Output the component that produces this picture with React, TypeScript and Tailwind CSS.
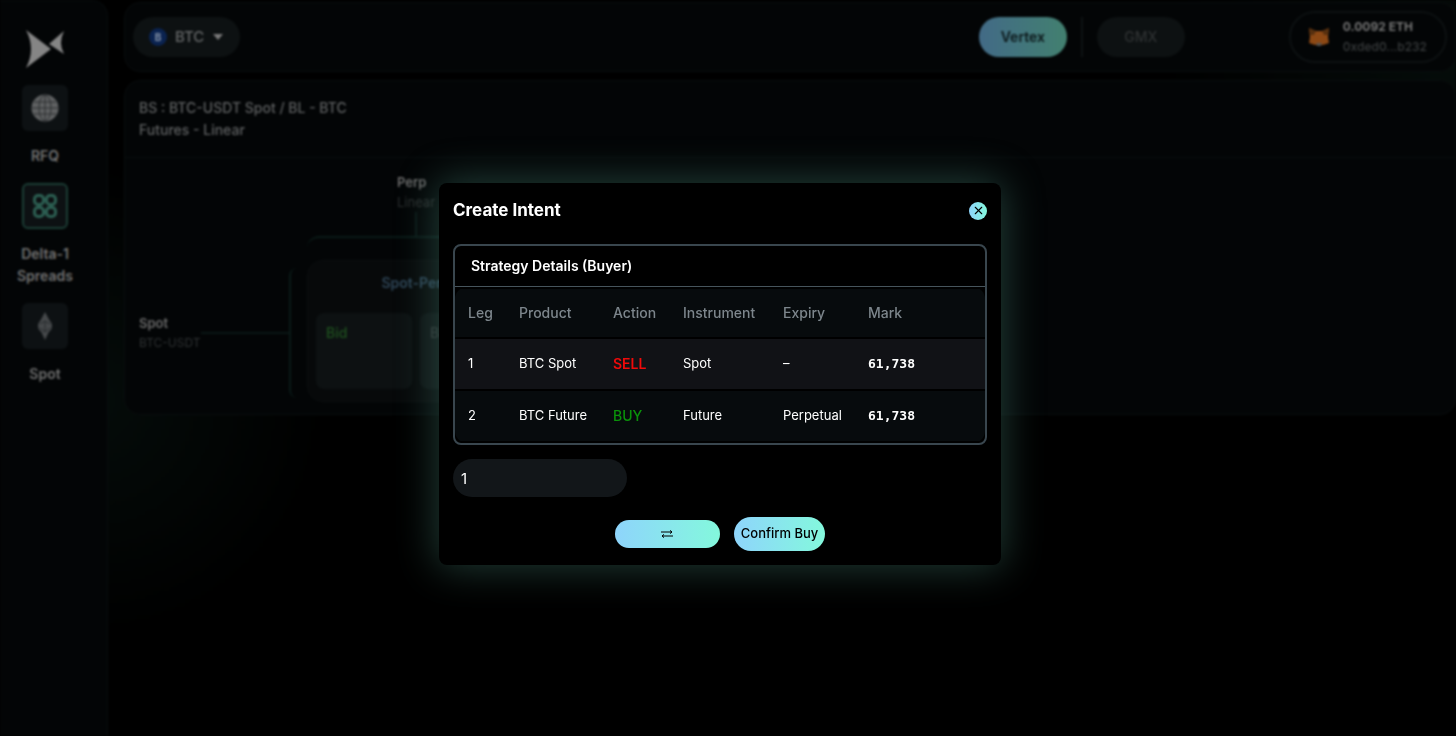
import { useState } from 'react'
import { X } from 'lucide-react'

type Leg = {
  id: number
  product: string
  action: 'BUY' | 'SELL'
  instrument: string
  expiry: string
  mark: string
}

const legs: Leg[] = [
  { id: 1, product: 'BTC Spot', action: 'SELL', instrument: 'Spot', expiry: '–', mark: '61,738' },
  { id: 2, product: 'BTC Future', action: 'BUY', instrument: 'Future', expiry: 'Perpetual', mark: '61,738' },
]

function Logo() {
  return (
    <svg className="h-10 w-10" viewBox="0 0 40 40" fill="#858585" aria-hidden="true">
      <path d="M1 1 L26 20 L1 39 Q11 20 1 1 Z" />
      <path d="M39 2 Q33 14 39 25 L24 15 Z" />
    </svg>
  )
}

function GlobeIcon() {
  return (
    <svg className="h-7 w-7" viewBox="0 0 28 28" fill="none" stroke="#2c2f31" strokeWidth={1} aria-hidden="true">
      <circle cx="14" cy="14" r="13.5" fill="#5f6162" stroke="none" />
      <ellipse cx="14" cy="14" rx="6" ry="13" />
      <path d="M14 1v26M1 14h26M3 8h22M3 20h22" />
    </svg>
  )
}

function SpreadsIcon() {
  return (
    <svg className="h-6 w-6" viewBox="0 0 24 24" fill="none" stroke="#2c5f52" strokeWidth={3} aria-hidden="true">
      <rect x="1.5" y="1.5" width="9" height="9" rx="3.5" />
      <rect x="13.5" y="1.5" width="9" height="9" rx="3.5" />
      <rect x="1.5" y="13.5" width="9" height="9" rx="3.5" />
      <rect x="13.5" y="13.5" width="9" height="9" rx="3.5" />
    </svg>
  )
}

function SpotIcon() {
  return (
    <svg className="h-7 w-4" viewBox="0 0 16 28" aria-hidden="true">
      <path d="M8 0 L15 13 L8 28 L1 13 Z" fill="#46494b" />
      <circle cx="8" cy="14" r="7" fill="#46494b" />
      <path d="M3 12 L8 9 L13 12 M3 16 L8 20 L13 16 M8 9v11" fill="none" stroke="#24282a" />
    </svg>
  )
}

function FoxIcon() {
  return (
    <svg className="h-5 w-5" viewBox="0 0 20 20" aria-hidden="true">
      <path d="M0 1 L7 4 H13 L20 1 L19 10 L20 16 L14 18 H6 L0 16 L1 10 Z" fill="#8c4814" />
      <path d="M0 1 L7 4 L5 8 L1 8 Z M20 1 L13 4 L15 8 L19 8 Z" fill="#57300f" />
      <path d="M7 16h6l-1 3H8z" fill="#55504c" />
    </svg>
  )
}

const navItems = [
  { label: 'RFQ', icon: <GlobeIcon />, active: false },
  { label: 'Delta-1 Spreads', icon: <SpreadsIcon />, active: true },
  { label: 'Spot', icon: <SpotIcon />, active: false },
]

function Sidebar() {
  return (
    <aside className="w-[108px] shrink-0 rounded-tr-2xl border-t border-r border-[#090d0e] bg-[#030506] pt-7">
      <nav className="flex w-[90px] flex-col items-center gap-4">
        <Logo />
        {navItems.map(item => (
          <a key={item.label} href="#" className="flex flex-col items-center gap-3.5 text-center text-sm leading-[22px] font-semibold text-[#717171]">
            <span
              className={`flex h-[46px] w-[46px] items-center justify-center rounded-md bg-[#0d1113] ${
                item.active ? 'border-2 border-[#1c3d35]' : ''
              }`}
            >
              {item.icon}
            </span>
            <span className="w-16">{item.label}</span>
          </a>
        ))}
      </nav>
    </aside>
  )
}

function Header() {
  return (
    <header className="flex items-center rounded-2xl border border-[#090d0e] bg-[#030506] px-2 py-2">
      <button type="button" className="flex h-10 items-center gap-2 rounded-full bg-[#0d1112] px-4 text-[15px] font-medium text-[#646667]">
        <span className="flex h-[18px] w-[18px] items-center justify-center rounded-full bg-[#0b2350] text-[10px] font-bold text-[#8593a8]">B</span>
        BTC
        <svg className="h-2 w-3" viewBox="0 0 12 8" fill="#7a7a7a" aria-hidden="true">
          <path d="M1 1h10L6 7z" />
        </svg>
      </button>
      <div className="ml-auto flex items-center gap-3.5">
        <button type="button" className="h-10 w-22 rounded-full bg-linear-to-r from-[#426a86] to-[#42806f] text-sm font-semibold text-[#0b1618]">
          Vertex
        </button>
        <span className="h-10 w-0.5 bg-[#0e1213]" />
        <button type="button" className="h-10 w-22 rounded-full bg-[#0d1112] text-sm font-medium text-[#2f3233]">
          GMX
        </button>
      </div>
      <button type="button" className="ml-26 flex h-[52px] items-center gap-3.5 rounded-full border-2 border-[#0d1112] px-[18px] text-left text-xs leading-5">
        <FoxIcon />
        <span>
          <span className="block font-bold text-[#747474]">0.0092 ETH</span>
          <span className="block font-medium text-[#3a3d3e]">0xded0...b232</span>
        </span>
      </button>
    </header>
  )
}

function StrategyPanel() {
  return (
    <section className="rounded-2xl border border-[#090d0e] bg-[#030506] pb-3">
      <div className="border-b border-[#090d0e] px-3.5 py-4">
        <h2 className="w-56 text-sm leading-[22px] font-medium text-[#5f6162]">BS : BTC-USDT Spot / BL - BTC Futures - Linear</h2>
      </div>
      <div className="grid grid-cols-[158px_218px] gap-x-2.5 px-3.5 pt-3.5 text-sm leading-5">
        <div className="col-start-2 flex flex-col items-center">
          <div className="text-[13px]">
            <p className="font-semibold text-[#6c6c6c]">Perp</p>
            <p className="text-[#2b2e2f]">Linear</p>
          </div>
          <span className="h-6 w-0.5 bg-[#0a1715]" />
          <span className="h-6 w-full rounded-t-xl border-t-2 border-[#0a1a17]" />
        </div>
        <div className="col-start-1 flex items-center pt-1">
          <div className="text-[13px]">
            <p className="font-semibold text-[#6c6c6c]">Spot</p>
            <p className="text-xs leading-5 text-[#2f3233]">BTC-USDT</p>
          </div>
          <span className="h-0.5 flex-1 bg-[#0a1715]" />
          <span className="h-[130px] w-2 rounded-l-lg border-l-2 border-[#0a1a17]" />
        </div>
        <div className="rounded-2xl border border-[#0b0e0f] bg-[#07090a] px-2 py-3">
          <h3 className="pb-5 text-center font-semibold text-[#2f4658]">Spot-Perp</h3>
          <div className="grid grid-cols-2 gap-2">
            <div className="h-[76px] rounded-lg bg-[#0d1112] p-2.5 leading-5 font-medium text-[#1f521f]">Bid</div>
            <div className="h-[76px] rounded-lg bg-[#0d1112] p-2.5 leading-5 font-medium text-[#2f3233]">Bid</div>
          </div>
        </div>
      </div>
    </section>
  )
}

function IntentModal() {
  const [quantity, setQuantity] = useState('1')

  return (
    <div
      role="dialog"
      aria-labelledby="intent-title"
      className="w-full max-w-[562px] rounded-lg bg-black p-3.5 text-white shadow-[0_0_40px_2px_rgba(92,170,150,0.36)]"
    >
      <div className="flex items-center justify-between pb-5">
        <h1 id="intent-title" className="text-[17px] leading-[27px] font-bold">Create Intent</h1>
        <button
          type="button"
          aria-label="Close"
          className="flex h-[18px] w-[18px] items-center justify-center rounded-full bg-linear-to-r from-[#8ed4fb] to-[#83f8dc] text-black"
        >
          <X size={13} strokeWidth={2} />
        </button>
      </div>

      <div className="rounded-lg border-2 border-[#39464e]">
        <h2 className="border-b border-[#46545c] px-4 py-2 text-sm leading-6 font-semibold">Strategy Details (Buyer)</h2>
        <div className="overflow-hidden rounded-xl">
          <table className="w-full table-fixed border-separate border-spacing-x-0 border-spacing-y-0.5 text-left text-[13px]">
            <thead>
              <tr className="h-12 bg-[#070b0d] text-sm text-[#7d868c] [&>th]:px-[13px] [&>th]:font-medium">
                <th className="w-[51px]">Leg</th>
                <th className="w-[94px]">Product</th>
                <th className="w-[70px]">Action</th>
                <th className="w-[100px]">Instrument</th>
                <th className="w-[85px]">Expiry</th>
                <th>Mark</th>
              </tr>
            </thead>
            <tbody>
              {legs.map(leg => (
                <tr key={leg.id} className="h-[50px] odd:bg-[#111216] even:bg-[#070b0d] [&>td]:px-[13px] [&>td]:whitespace-nowrap">
                  <td>{leg.id}</td>
                  <td>{leg.product}</td>
                  <td className={leg.action === 'SELL' ? 'text-sm font-semibold text-[#f00a0a]' : 'text-sm font-medium text-[#0a920a]'}>
                    {leg.action}
                  </td>
                  <td>{leg.instrument}</td>
                  <td>{leg.expiry}</td>
                  <td className="font-['DejaVu_Sans_Mono',monospace] font-bold">{leg.mark}</td>
                </tr>
              ))}
            </tbody>
          </table>
        </div>
      </div>

      <input
        type="text"
        aria-label="Quantity"
        value={quantity}
        onChange={e => setQuantity(e.target.value)}
        className="mt-3.5 block h-[38px] w-[174px] rounded-full bg-[#121619] px-2 text-[15px] outline-none"
      />

      <div className="mt-5 flex items-center justify-center gap-3.5 text-black">
        <button
          type="button"
          aria-label="Swap side"
          className="flex h-7 w-[105px] items-center justify-center rounded-full bg-linear-to-r from-[#8ed4fb] to-[#83f8dc]"
        >
          <svg className="h-2 w-3" viewBox="0 0 12 8" fill="none" stroke="currentColor" strokeWidth={1} aria-hidden="true">
            <path d="M0 2h11M9 .4L11 2 9 3.6M12 6H1M3 4.4L1 6l2 1.6" />
          </svg>
        </button>
        <button
          type="button"
          className="h-[34px] rounded-full bg-linear-to-r from-[#8ed4fb] to-[#83f8dc] px-[7px] text-[13px] font-medium whitespace-nowrap"
        >
          Confirm Buy
        </button>
      </div>
    </div>
  )
}

export default function App() {
  return (
    <div className="min-h-screen bg-black font-['Inter',sans-serif]">
      <div className="flex min-h-screen bg-[radial-gradient(circle_at_90px_400px,#050c0a_0,transparent_240px),radial-gradient(circle_at_100%_60px,#050c0a_0,transparent_300px)] blur-[1px]">
        <Sidebar />
        <main className="flex min-w-0 flex-1 flex-col gap-2 pt-0.5 pl-4">
          <Header />
          <StrategyPanel />
        </main>
      </div>
      <div className="fixed inset-0 flex items-center justify-center pt-3 pr-4">
        <IntentModal />
      </div>
    </div>
  )
}
